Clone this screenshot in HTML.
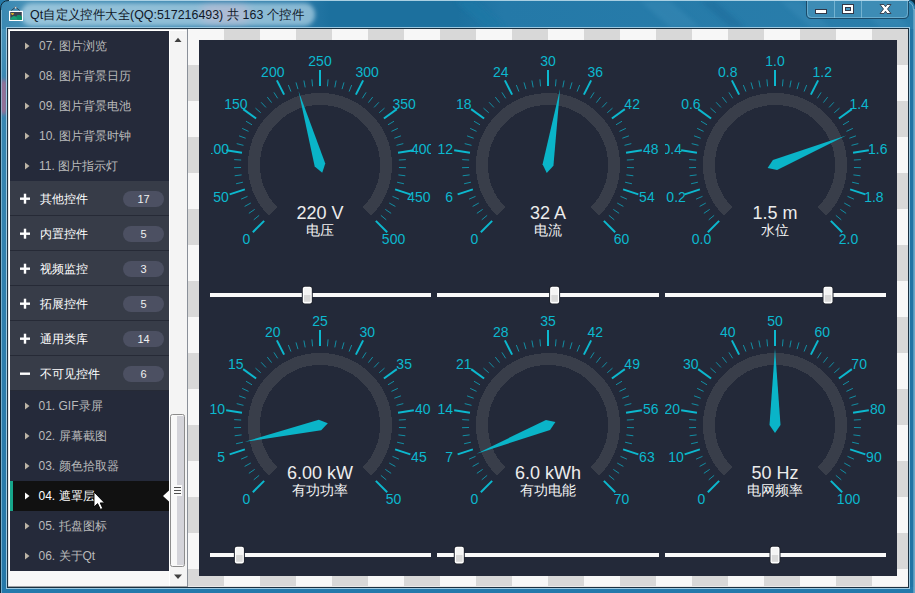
<!DOCTYPE html><html><head><meta charset="utf-8"><style>
html,body{margin:0;padding:0}body{width:915px;height:593px;overflow:hidden;position:relative;font-family:"Liberation Sans",sans-serif;background:#2a7aa8}
.ab{position:absolute}
</style></head><body>
<svg class="ab" style="left:0;top:0" width="915" height="593" viewBox="0 0 915 593" font-family="Liberation Sans, sans-serif">
<defs>
<linearGradient id="tb" x1="0" y1="0" x2="1" y2="0"><stop offset="0" stop-color="#3a88b2"/><stop offset="0.027" stop-color="#4690b6"/><stop offset="0.33" stop-color="#2a7aa8"/><stop offset="0.36" stop-color="#1c709e"/><stop offset="0.5" stop-color="#1c709e"/><stop offset="0.55" stop-color="#2479a8"/><stop offset="1" stop-color="#2a7eab"/></linearGradient>
<filter id="blur" x="-20%" y="-50%" width="140%" height="200%"><feGaussianBlur stdDeviation="4"/></filter>
<filter id="blur2" x="-20%" y="-50%" width="140%" height="200%"><feGaussianBlur stdDeviation="2.2"/></filter>
<linearGradient id="lb" x1="0" y1="0" x2="0" y2="1"><stop offset="0" stop-color="#4a94ba"/><stop offset="0.1" stop-color="#3a88b2"/><stop offset="0.5" stop-color="#3080ae"/><stop offset="1" stop-color="#2678a8"/></linearGradient>
</defs>
<rect x="0" y="0" width="915" height="593" fill="#2479a8"/>
<path d="M0 593 V9 Q0 0 9 0 H906 Q915 0 915 9 V593 Z" fill="url(#tb)"/>
<path d="M455 1 L475 1 L505 27 L485 27 Z" fill="#1f78a6" opacity="0.8" filter="url(#blur2)"/>
<path d="M640 1 L670 1 L700 27 L670 27 Z" fill="#3a8cb8" opacity="0.45" filter="url(#blur2)"/>
<path d="M700 1 L715 1 L745 27 L730 27 Z" fill="#1a6a9a" opacity="0.5" filter="url(#blur2)"/>
<path d="M780 1 L800 1 L830 27 L810 27 Z" fill="#3a8cb8" opacity="0.45" filter="url(#blur2)"/>
<path d="M850 1 L880 1 L910 27 L880 27 Z" fill="#3a8cb8" opacity="0.5" filter="url(#blur2)"/>
<rect x="0" y="29" width="7" height="564" fill="url(#lb)"/>
<rect x="0" y="80" width="7" height="34" fill="#c0688a" opacity="0.75" filter="url(#blur2)"/>
<rect x="908" y="29" width="7" height="564" fill="#2174a4"/>
<rect x="0" y="587" width="915" height="6" fill="#2479ab"/>
<path d="M0.5 593 V9 Q0.5 0.5 9 0.5" fill="none" stroke="#0d2838" stroke-width="1"/>
<path d="M909 0 L915 0 L915 6 Q914 1 909 0 Z" fill="#0d2838"/>
<path d="M905 1.5 Q913.5 1.5 913.5 10" fill="none" stroke="#a8d0e4" stroke-width="1" opacity="0.6"/>
<rect x="914" y="9" width="1" height="584" fill="#6aa8c8"/>
<rect x="9" y="0" width="897" height="1" fill="#a8cfe2"/>
<rect x="1" y="10" width="1" height="583" fill="#a8d0e4" opacity="0.6"/>
<rect x="913" y="10" width="1" height="583" fill="#a8d0e4" opacity="0.4"/>
<rect x="21" y="3" width="294" height="23" rx="11" fill="#d8eef8" opacity="0.55" filter="url(#blur2)"/>
<rect x="200" y="4" width="50" height="20" rx="10" fill="#e8b8d0" opacity="0.35" filter="url(#blur)"/>
<text x="30" y="19" font-size="13" fill="#101828" textLength="274" lengthAdjust="spacingAndGlyphs">Qt自定义控件大全(QQ:517216493) 共 163 个控件</text>
<path d="M11 10.8 L15.5 7.2 L20 10.8" fill="none" stroke="#2a3a48" stroke-width="0.9"/>
<rect x="14.8" y="6.8" width="1.6" height="1.8" fill="#e0d0c8"/>
<rect x="9" y="10.8" width="14" height="10.2" fill="#ffffff"/>
<rect x="10.2" y="12" width="11.6" height="7.8" fill="#3a4252"/>
<path d="M10.2 19.8 L10.2 18.5 Q12.5 15.6 14 16 Q15.5 16.2 16.2 17 Q17.5 14.6 19 15 Q20.8 15.6 21.8 17 L21.8 19.8 Z" fill="#18a078"/>
<path d="M16.2 17 Q17.5 14.6 19 15 Q20.8 15.6 21.8 17 L21.8 19.8 L17.5 19.8 Z" fill="#0e9068"/>
<path d="M11 13.2 Q11.8 12.6 12.5 13.2 Q13.3 12.6 14 13.2 Q13.8 14.6 12.4 15 Q11.2 14.4 11 13.2 Z" fill="#f2c020"/>
<path d="M806.5 0 V14 Q806.5 18.5 811 18.5 H904 Q908.5 18.5 908.5 14 V0" fill="#3d8cb5" stroke="#1a4a68" stroke-width="1"/>
<path d="M807.5 0 V13.5 Q807.5 17.5 811.5 17.5 H903.5 Q907.5 17.5 907.5 13.5 V0" fill="none" stroke="#8cc4de" stroke-width="0.8" opacity="0.7"/>
<line x1="834.5" y1="0" x2="834.5" y2="18" stroke="#8cc4de" stroke-width="1" opacity="0.7"/>
<line x1="861.5" y1="0" x2="861.5" y2="18" stroke="#8cc4de" stroke-width="1" opacity="0.7"/>
<rect x="815.5" y="9.5" width="11" height="4" fill="#fff" stroke="#333848" stroke-width="1"/>
<rect x="842.5" y="4.5" width="11" height="9" fill="#fff" stroke="#333848" stroke-width="1"/>
<rect x="845.5" y="7.5" width="5" height="3" fill="#4a98c0" stroke="#333848" stroke-width="1"/>
<path d="M880 4.5 L884 4.5 L885.5 6.8 L887 4.5 L891 4.5 L887.5 9 L891 13.5 L887 13.5 L885.5 11.2 L884 13.5 L880 13.5 L883.5 9 Z" fill="#fff" stroke="#333848" stroke-width="0.9"/>
<rect x="806" y="0" width="103" height="1" fill="#b0d6ea"/>
<rect x="6.5" y="27.5" width="903" height="561" fill="none" stroke="#9cc8e0" stroke-width="1"/>
<rect x="7.5" y="28.5" width="901" height="559" fill="none" stroke="#1a3040" stroke-width="1"/>
<rect x="8" y="29" width="900" height="558" fill="#f7f7f7"/>
<rect x="188" y="29" width="720" height="557" fill="#f7f7f7"/>
<rect x="224" y="29" width="36" height="36" fill="#d8d8d8"/>
<rect x="296" y="29" width="36" height="36" fill="#d8d8d8"/>
<rect x="368" y="29" width="36" height="36" fill="#d8d8d8"/>
<rect x="440" y="29" width="36" height="36" fill="#d8d8d8"/>
<rect x="512" y="29" width="36" height="36" fill="#d8d8d8"/>
<rect x="584" y="29" width="36" height="36" fill="#d8d8d8"/>
<rect x="656" y="29" width="36" height="36" fill="#d8d8d8"/>
<rect x="728" y="29" width="36" height="36" fill="#d8d8d8"/>
<rect x="800" y="29" width="36" height="36" fill="#d8d8d8"/>
<rect x="872" y="29" width="36" height="36" fill="#d8d8d8"/>
<rect x="188" y="65" width="36" height="36" fill="#d8d8d8"/>
<rect x="260" y="65" width="36" height="36" fill="#d8d8d8"/>
<rect x="332" y="65" width="36" height="36" fill="#d8d8d8"/>
<rect x="404" y="65" width="36" height="36" fill="#d8d8d8"/>
<rect x="476" y="65" width="36" height="36" fill="#d8d8d8"/>
<rect x="548" y="65" width="36" height="36" fill="#d8d8d8"/>
<rect x="620" y="65" width="36" height="36" fill="#d8d8d8"/>
<rect x="692" y="65" width="36" height="36" fill="#d8d8d8"/>
<rect x="764" y="65" width="36" height="36" fill="#d8d8d8"/>
<rect x="836" y="65" width="36" height="36" fill="#d8d8d8"/>
<rect x="224" y="101" width="36" height="36" fill="#d8d8d8"/>
<rect x="296" y="101" width="36" height="36" fill="#d8d8d8"/>
<rect x="368" y="101" width="36" height="36" fill="#d8d8d8"/>
<rect x="440" y="101" width="36" height="36" fill="#d8d8d8"/>
<rect x="512" y="101" width="36" height="36" fill="#d8d8d8"/>
<rect x="584" y="101" width="36" height="36" fill="#d8d8d8"/>
<rect x="656" y="101" width="36" height="36" fill="#d8d8d8"/>
<rect x="728" y="101" width="36" height="36" fill="#d8d8d8"/>
<rect x="800" y="101" width="36" height="36" fill="#d8d8d8"/>
<rect x="872" y="101" width="36" height="36" fill="#d8d8d8"/>
<rect x="188" y="137" width="36" height="36" fill="#d8d8d8"/>
<rect x="260" y="137" width="36" height="36" fill="#d8d8d8"/>
<rect x="332" y="137" width="36" height="36" fill="#d8d8d8"/>
<rect x="404" y="137" width="36" height="36" fill="#d8d8d8"/>
<rect x="476" y="137" width="36" height="36" fill="#d8d8d8"/>
<rect x="548" y="137" width="36" height="36" fill="#d8d8d8"/>
<rect x="620" y="137" width="36" height="36" fill="#d8d8d8"/>
<rect x="692" y="137" width="36" height="36" fill="#d8d8d8"/>
<rect x="764" y="137" width="36" height="36" fill="#d8d8d8"/>
<rect x="836" y="137" width="36" height="36" fill="#d8d8d8"/>
<rect x="224" y="173" width="36" height="36" fill="#d8d8d8"/>
<rect x="296" y="173" width="36" height="36" fill="#d8d8d8"/>
<rect x="368" y="173" width="36" height="36" fill="#d8d8d8"/>
<rect x="440" y="173" width="36" height="36" fill="#d8d8d8"/>
<rect x="512" y="173" width="36" height="36" fill="#d8d8d8"/>
<rect x="584" y="173" width="36" height="36" fill="#d8d8d8"/>
<rect x="656" y="173" width="36" height="36" fill="#d8d8d8"/>
<rect x="728" y="173" width="36" height="36" fill="#d8d8d8"/>
<rect x="800" y="173" width="36" height="36" fill="#d8d8d8"/>
<rect x="872" y="173" width="36" height="36" fill="#d8d8d8"/>
<rect x="188" y="209" width="36" height="36" fill="#d8d8d8"/>
<rect x="260" y="209" width="36" height="36" fill="#d8d8d8"/>
<rect x="332" y="209" width="36" height="36" fill="#d8d8d8"/>
<rect x="404" y="209" width="36" height="36" fill="#d8d8d8"/>
<rect x="476" y="209" width="36" height="36" fill="#d8d8d8"/>
<rect x="548" y="209" width="36" height="36" fill="#d8d8d8"/>
<rect x="620" y="209" width="36" height="36" fill="#d8d8d8"/>
<rect x="692" y="209" width="36" height="36" fill="#d8d8d8"/>
<rect x="764" y="209" width="36" height="36" fill="#d8d8d8"/>
<rect x="836" y="209" width="36" height="36" fill="#d8d8d8"/>
<rect x="224" y="245" width="36" height="36" fill="#d8d8d8"/>
<rect x="296" y="245" width="36" height="36" fill="#d8d8d8"/>
<rect x="368" y="245" width="36" height="36" fill="#d8d8d8"/>
<rect x="440" y="245" width="36" height="36" fill="#d8d8d8"/>
<rect x="512" y="245" width="36" height="36" fill="#d8d8d8"/>
<rect x="584" y="245" width="36" height="36" fill="#d8d8d8"/>
<rect x="656" y="245" width="36" height="36" fill="#d8d8d8"/>
<rect x="728" y="245" width="36" height="36" fill="#d8d8d8"/>
<rect x="800" y="245" width="36" height="36" fill="#d8d8d8"/>
<rect x="872" y="245" width="36" height="36" fill="#d8d8d8"/>
<rect x="188" y="281" width="36" height="36" fill="#d8d8d8"/>
<rect x="260" y="281" width="36" height="36" fill="#d8d8d8"/>
<rect x="332" y="281" width="36" height="36" fill="#d8d8d8"/>
<rect x="404" y="281" width="36" height="36" fill="#d8d8d8"/>
<rect x="476" y="281" width="36" height="36" fill="#d8d8d8"/>
<rect x="548" y="281" width="36" height="36" fill="#d8d8d8"/>
<rect x="620" y="281" width="36" height="36" fill="#d8d8d8"/>
<rect x="692" y="281" width="36" height="36" fill="#d8d8d8"/>
<rect x="764" y="281" width="36" height="36" fill="#d8d8d8"/>
<rect x="836" y="281" width="36" height="36" fill="#d8d8d8"/>
<rect x="224" y="317" width="36" height="36" fill="#d8d8d8"/>
<rect x="296" y="317" width="36" height="36" fill="#d8d8d8"/>
<rect x="368" y="317" width="36" height="36" fill="#d8d8d8"/>
<rect x="440" y="317" width="36" height="36" fill="#d8d8d8"/>
<rect x="512" y="317" width="36" height="36" fill="#d8d8d8"/>
<rect x="584" y="317" width="36" height="36" fill="#d8d8d8"/>
<rect x="656" y="317" width="36" height="36" fill="#d8d8d8"/>
<rect x="728" y="317" width="36" height="36" fill="#d8d8d8"/>
<rect x="800" y="317" width="36" height="36" fill="#d8d8d8"/>
<rect x="872" y="317" width="36" height="36" fill="#d8d8d8"/>
<rect x="188" y="353" width="36" height="36" fill="#d8d8d8"/>
<rect x="260" y="353" width="36" height="36" fill="#d8d8d8"/>
<rect x="332" y="353" width="36" height="36" fill="#d8d8d8"/>
<rect x="404" y="353" width="36" height="36" fill="#d8d8d8"/>
<rect x="476" y="353" width="36" height="36" fill="#d8d8d8"/>
<rect x="548" y="353" width="36" height="36" fill="#d8d8d8"/>
<rect x="620" y="353" width="36" height="36" fill="#d8d8d8"/>
<rect x="692" y="353" width="36" height="36" fill="#d8d8d8"/>
<rect x="764" y="353" width="36" height="36" fill="#d8d8d8"/>
<rect x="836" y="353" width="36" height="36" fill="#d8d8d8"/>
<rect x="224" y="389" width="36" height="36" fill="#d8d8d8"/>
<rect x="296" y="389" width="36" height="36" fill="#d8d8d8"/>
<rect x="368" y="389" width="36" height="36" fill="#d8d8d8"/>
<rect x="440" y="389" width="36" height="36" fill="#d8d8d8"/>
<rect x="512" y="389" width="36" height="36" fill="#d8d8d8"/>
<rect x="584" y="389" width="36" height="36" fill="#d8d8d8"/>
<rect x="656" y="389" width="36" height="36" fill="#d8d8d8"/>
<rect x="728" y="389" width="36" height="36" fill="#d8d8d8"/>
<rect x="800" y="389" width="36" height="36" fill="#d8d8d8"/>
<rect x="872" y="389" width="36" height="36" fill="#d8d8d8"/>
<rect x="188" y="425" width="36" height="36" fill="#d8d8d8"/>
<rect x="260" y="425" width="36" height="36" fill="#d8d8d8"/>
<rect x="332" y="425" width="36" height="36" fill="#d8d8d8"/>
<rect x="404" y="425" width="36" height="36" fill="#d8d8d8"/>
<rect x="476" y="425" width="36" height="36" fill="#d8d8d8"/>
<rect x="548" y="425" width="36" height="36" fill="#d8d8d8"/>
<rect x="620" y="425" width="36" height="36" fill="#d8d8d8"/>
<rect x="692" y="425" width="36" height="36" fill="#d8d8d8"/>
<rect x="764" y="425" width="36" height="36" fill="#d8d8d8"/>
<rect x="836" y="425" width="36" height="36" fill="#d8d8d8"/>
<rect x="224" y="461" width="36" height="36" fill="#d8d8d8"/>
<rect x="296" y="461" width="36" height="36" fill="#d8d8d8"/>
<rect x="368" y="461" width="36" height="36" fill="#d8d8d8"/>
<rect x="440" y="461" width="36" height="36" fill="#d8d8d8"/>
<rect x="512" y="461" width="36" height="36" fill="#d8d8d8"/>
<rect x="584" y="461" width="36" height="36" fill="#d8d8d8"/>
<rect x="656" y="461" width="36" height="36" fill="#d8d8d8"/>
<rect x="728" y="461" width="36" height="36" fill="#d8d8d8"/>
<rect x="800" y="461" width="36" height="36" fill="#d8d8d8"/>
<rect x="872" y="461" width="36" height="36" fill="#d8d8d8"/>
<rect x="188" y="497" width="36" height="36" fill="#d8d8d8"/>
<rect x="260" y="497" width="36" height="36" fill="#d8d8d8"/>
<rect x="332" y="497" width="36" height="36" fill="#d8d8d8"/>
<rect x="404" y="497" width="36" height="36" fill="#d8d8d8"/>
<rect x="476" y="497" width="36" height="36" fill="#d8d8d8"/>
<rect x="548" y="497" width="36" height="36" fill="#d8d8d8"/>
<rect x="620" y="497" width="36" height="36" fill="#d8d8d8"/>
<rect x="692" y="497" width="36" height="36" fill="#d8d8d8"/>
<rect x="764" y="497" width="36" height="36" fill="#d8d8d8"/>
<rect x="836" y="497" width="36" height="36" fill="#d8d8d8"/>
<rect x="224" y="533" width="36" height="36" fill="#d8d8d8"/>
<rect x="296" y="533" width="36" height="36" fill="#d8d8d8"/>
<rect x="368" y="533" width="36" height="36" fill="#d8d8d8"/>
<rect x="440" y="533" width="36" height="36" fill="#d8d8d8"/>
<rect x="512" y="533" width="36" height="36" fill="#d8d8d8"/>
<rect x="584" y="533" width="36" height="36" fill="#d8d8d8"/>
<rect x="656" y="533" width="36" height="36" fill="#d8d8d8"/>
<rect x="728" y="533" width="36" height="36" fill="#d8d8d8"/>
<rect x="800" y="533" width="36" height="36" fill="#d8d8d8"/>
<rect x="872" y="533" width="36" height="36" fill="#d8d8d8"/>
<rect x="188" y="569" width="36" height="18" fill="#d8d8d8"/>
<rect x="260" y="569" width="36" height="18" fill="#d8d8d8"/>
<rect x="332" y="569" width="36" height="18" fill="#d8d8d8"/>
<rect x="404" y="569" width="36" height="18" fill="#d8d8d8"/>
<rect x="476" y="569" width="36" height="18" fill="#d8d8d8"/>
<rect x="548" y="569" width="36" height="18" fill="#d8d8d8"/>
<rect x="620" y="569" width="36" height="18" fill="#d8d8d8"/>
<rect x="692" y="569" width="36" height="18" fill="#d8d8d8"/>
<rect x="764" y="569" width="36" height="18" fill="#d8d8d8"/>
<rect x="836" y="569" width="36" height="18" fill="#d8d8d8"/>
<rect x="187" y="29" width="1" height="558" fill="#8a9099"/>
<rect x="8" y="29" width="179" height="558" fill="#f8f8f8"/>
<rect x="8" y="29" width="179" height="1" fill="#e4e4e4"/>
<rect x="8" y="29" width="1" height="558" fill="#e4e4e4"/>
<rect x="9" y="30" width="177" height="1" fill="#ffffff"/>
<rect x="9" y="30" width="1" height="556" fill="#ffffff"/>
<rect x="10" y="31" width="159" height="540" fill="#252a3a"/>
<path d="M25 42.5 L29.5 46 L25 49.5 Z" fill="#bcb4a6"/>
<text x="39" y="49.5" font-size="12" fill="#bababa">07. 图片浏览</text>
<path d="M25 72.5 L29.5 76 L25 79.5 Z" fill="#bcb4a6"/>
<text x="39" y="79.5" font-size="12" fill="#bababa">08. 图片背景日历</text>
<path d="M25 102.5 L29.5 106 L25 109.5 Z" fill="#bcb4a6"/>
<text x="39" y="109.5" font-size="12" fill="#bababa">09. 图片背景电池</text>
<path d="M25 132.5 L29.5 136 L25 139.5 Z" fill="#bcb4a6"/>
<text x="39" y="139.5" font-size="12" fill="#bababa">10. 图片背景时钟</text>
<path d="M25 162.5 L29.5 166 L25 169.5 Z" fill="#bcb4a6"/>
<text x="39" y="169.5" font-size="12" fill="#bababa">11. 图片指示灯</text>
<rect x="10" y="181" width="159" height="35" fill="#373c48"/>
<rect x="10" y="215" width="159" height="1" fill="#262a36"/>
<rect x="20" y="197.5" width="10" height="2.4" fill="#ffffff"/>
<rect x="23.8" y="193.7" width="2.4" height="10" fill="#ffffff"/>
<text x="40" y="202.5" font-size="12" fill="#ffffff">其他控件</text>
<rect x="123" y="191" width="41" height="16" rx="8" fill="#4c5062"/>
<text x="143.5" y="202.5" font-size="11" fill="#f0f0f0" text-anchor="middle">17</text>
<rect x="10" y="216" width="159" height="35" fill="#373c48"/>
<rect x="10" y="250" width="159" height="1" fill="#262a36"/>
<rect x="20" y="232.5" width="10" height="2.4" fill="#ffffff"/>
<rect x="23.8" y="228.7" width="2.4" height="10" fill="#ffffff"/>
<text x="40" y="237.5" font-size="12" fill="#ffffff">内置控件</text>
<rect x="123" y="226" width="41" height="16" rx="8" fill="#4c5062"/>
<text x="143.5" y="237.5" font-size="11" fill="#f0f0f0" text-anchor="middle">5</text>
<rect x="10" y="251" width="159" height="35" fill="#373c48"/>
<rect x="10" y="285" width="159" height="1" fill="#262a36"/>
<rect x="20" y="267.5" width="10" height="2.4" fill="#ffffff"/>
<rect x="23.8" y="263.7" width="2.4" height="10" fill="#ffffff"/>
<text x="40" y="272.5" font-size="12" fill="#ffffff">视频监控</text>
<rect x="123" y="261" width="41" height="16" rx="8" fill="#4c5062"/>
<text x="143.5" y="272.5" font-size="11" fill="#f0f0f0" text-anchor="middle">3</text>
<rect x="10" y="286" width="159" height="35" fill="#373c48"/>
<rect x="10" y="320" width="159" height="1" fill="#262a36"/>
<rect x="20" y="302.5" width="10" height="2.4" fill="#ffffff"/>
<rect x="23.8" y="298.7" width="2.4" height="10" fill="#ffffff"/>
<text x="40" y="307.5" font-size="12" fill="#ffffff">拓展控件</text>
<rect x="123" y="296" width="41" height="16" rx="8" fill="#4c5062"/>
<text x="143.5" y="307.5" font-size="11" fill="#f0f0f0" text-anchor="middle">5</text>
<rect x="10" y="321" width="159" height="35" fill="#373c48"/>
<rect x="10" y="355" width="159" height="1" fill="#262a36"/>
<rect x="20" y="337.5" width="10" height="2.4" fill="#ffffff"/>
<rect x="23.8" y="333.7" width="2.4" height="10" fill="#ffffff"/>
<text x="40" y="342.5" font-size="12" fill="#ffffff">通用类库</text>
<rect x="123" y="331" width="41" height="16" rx="8" fill="#4c5062"/>
<text x="143.5" y="342.5" font-size="11" fill="#f0f0f0" text-anchor="middle">14</text>
<rect x="10" y="356" width="159" height="35" fill="#373c48"/>
<rect x="10" y="390" width="159" height="1" fill="#262a36"/>
<rect x="20" y="372.5" width="10" height="2.4" fill="#ffffff"/>
<text x="40" y="377.5" font-size="12" fill="#ffffff">不可见控件</text>
<rect x="123" y="366" width="41" height="16" rx="8" fill="#4c5062"/>
<text x="143.5" y="377.5" font-size="11" fill="#f0f0f0" text-anchor="middle">6</text>
<path d="M25 402.5 L29.5 406 L25 409.5 Z" fill="#bcb4a6"/>
<text x="38.5" y="409.5" font-size="12" fill="#bababa">01. GIF录屏</text>
<path d="M25 432.5 L29.5 436 L25 439.5 Z" fill="#bcb4a6"/>
<text x="38.5" y="439.5" font-size="12" fill="#bababa">02. 屏幕截图</text>
<path d="M25 462.5 L29.5 466 L25 469.5 Z" fill="#bcb4a6"/>
<text x="38.5" y="469.5" font-size="12" fill="#bababa">03. 颜色拾取器</text>
<rect x="10" y="481" width="159" height="30" fill="#111111"/>
<rect x="10" y="481" width="3" height="30" fill="#16a58a"/>
<path d="M169 490.5 L163 496 L169 501.5 Z" fill="#ffffff"/>
<path d="M25 492.5 L29.5 496 L25 499.5 Z" fill="#ffffff"/>
<text x="38.5" y="499.5" font-size="12" fill="#ffffff">04. 遮罩层</text>
<path d="M25 522.5 L29.5 526 L25 529.5 Z" fill="#bcb4a6"/>
<text x="38.5" y="529.5" font-size="12" fill="#bababa">05. 托盘图标</text>
<path d="M25 552.5 L29.5 556 L25 559.5 Z" fill="#bcb4a6"/>
<text x="38.5" y="559.5" font-size="12" fill="#bababa">06. 关于Qt</text>
<path d="M94.0 492.0 L94.0 507.0 L97.6 503.6 L100.4 509.4 L102.8 508.4 L100.2 502.9 L104.6 502.9 Z" fill="#ffffff" stroke="#000" stroke-width="0.9" stroke-linejoin="miter"/>
<rect x="169" y="31" width="1" height="555" fill="#ffffff"/>
<rect x="170" y="31" width="17" height="555" fill="#f4f4f4"/>
<path d="M174.5 42 L178 37.8 L181.5 42 Z" fill="#404040"/>
<path d="M174 574.5 L178 579 L182 574.5 Z" fill="#404040"/>
<rect x="170.5" y="414.5" width="14" height="152" rx="2" fill="#f8f8f8" stroke="#8c8c8c" stroke-width="1"/>
<rect x="177" y="416" width="7" height="149" fill="#d4d4da"/>
<rect x="173" y="485" width="9" height="11" fill="#fafafa"/>
<rect x="174" y="487" width="7" height="1" fill="#505050"/>
<rect x="174" y="490" width="7" height="1" fill="#505050"/>
<rect x="174" y="493" width="7" height="1" fill="#505050"/>
<rect x="8" y="586" width="179" height="1" fill="#a0a2a6"/>
<rect x="188" y="586" width="720" height="1" fill="#ebe8e8"/>
<rect x="199" y="40" width="698" height="536" fill="#232939"/>
<clipPath id="c0"><rect x="211" y="40" width="220" height="250"/></clipPath>
<g clip-path="url(#c0)">
<path d="M273.33 211.67 A66 66 0 1 1 366.67 211.67" fill="none" stroke="#393e4a" stroke-width="12" shape-rendering="crispEdges"/>
<line x1="264.14" y1="220.86" x2="252.82" y2="232.18" stroke="#0cb8ce" stroke-width="2"/>
<text x="246.46" y="243.54" font-size="14" fill="#0cb8ce" text-anchor="middle">0</text>
<line x1="259.13" y1="215.36" x2="253.74" y2="219.82" stroke="#0cb8ce" stroke-width="1" stroke-opacity="0.7"/>
<line x1="254.66" y1="209.40" x2="248.87" y2="213.34" stroke="#0cb8ce" stroke-width="1" stroke-opacity="0.7"/>
<line x1="250.77" y1="203.06" x2="244.64" y2="206.43" stroke="#0cb8ce" stroke-width="1" stroke-opacity="0.7"/>
<line x1="247.50" y1="196.37" x2="241.07" y2="199.15" stroke="#0cb8ce" stroke-width="1" stroke-opacity="0.7"/>
<line x1="244.87" y1="189.41" x2="229.65" y2="194.36" stroke="#0cb8ce" stroke-width="2"/>
<text x="221.09" y="202.14" font-size="14" fill="#0cb8ce" text-anchor="middle">50</text>
<line x1="242.90" y1="182.23" x2="236.07" y2="183.76" stroke="#0cb8ce" stroke-width="1" stroke-opacity="0.7"/>
<line x1="241.62" y1="174.90" x2="234.68" y2="175.78" stroke="#0cb8ce" stroke-width="1" stroke-opacity="0.7"/>
<line x1="241.04" y1="167.48" x2="234.04" y2="167.70" stroke="#0cb8ce" stroke-width="1" stroke-opacity="0.7"/>
<line x1="241.16" y1="160.04" x2="234.17" y2="159.60" stroke="#0cb8ce" stroke-width="1" stroke-opacity="0.7"/>
<line x1="241.97" y1="152.64" x2="226.17" y2="150.14" stroke="#0cb8ce" stroke-width="2"/>
<text x="217.28" y="153.73" font-size="14" fill="#0cb8ce" text-anchor="middle">100</text>
<line x1="243.48" y1="145.35" x2="236.70" y2="143.61" stroke="#0cb8ce" stroke-width="1" stroke-opacity="0.7"/>
<line x1="245.67" y1="138.24" x2="239.08" y2="135.87" stroke="#0cb8ce" stroke-width="1" stroke-opacity="0.7"/>
<line x1="248.52" y1="131.36" x2="242.18" y2="128.38" stroke="#0cb8ce" stroke-width="1" stroke-opacity="0.7"/>
<line x1="252.00" y1="124.79" x2="245.98" y2="121.22" stroke="#0cb8ce" stroke-width="1" stroke-opacity="0.7"/>
<line x1="256.09" y1="118.56" x2="243.14" y2="109.16" stroke="#0cb8ce" stroke-width="2"/>
<text x="235.86" y="108.87" font-size="14" fill="#0cb8ce" text-anchor="middle">150</text>
<line x1="260.74" y1="112.76" x2="255.49" y2="108.13" stroke="#0cb8ce" stroke-width="1" stroke-opacity="0.7"/>
<line x1="265.92" y1="107.41" x2="261.13" y2="102.31" stroke="#0cb8ce" stroke-width="1" stroke-opacity="0.7"/>
<line x1="271.58" y1="102.58" x2="267.29" y2="97.05" stroke="#0cb8ce" stroke-width="1" stroke-opacity="0.7"/>
<line x1="277.67" y1="98.30" x2="273.92" y2="92.39" stroke="#0cb8ce" stroke-width="1" stroke-opacity="0.7"/>
<line x1="284.13" y1="94.61" x2="276.87" y2="80.35" stroke="#0cb8ce" stroke-width="2"/>
<text x="272.78" y="77.34" font-size="14" fill="#0cb8ce" text-anchor="middle">200</text>
<line x1="290.92" y1="91.55" x2="288.34" y2="85.04" stroke="#0cb8ce" stroke-width="1" stroke-opacity="0.7"/>
<line x1="297.96" y1="89.14" x2="296.01" y2="82.41" stroke="#0cb8ce" stroke-width="1" stroke-opacity="0.7"/>
<line x1="305.20" y1="87.40" x2="303.89" y2="80.52" stroke="#0cb8ce" stroke-width="1" stroke-opacity="0.7"/>
<line x1="312.57" y1="86.35" x2="311.91" y2="79.38" stroke="#0cb8ce" stroke-width="1" stroke-opacity="0.7"/>
<line x1="320.00" y1="86.00" x2="320.00" y2="70.00" stroke="#0cb8ce" stroke-width="2"/>
<text x="320.00" y="66.00" font-size="14" fill="#0cb8ce" text-anchor="middle">250</text>
<line x1="327.43" y1="86.35" x2="328.09" y2="79.38" stroke="#0cb8ce" stroke-width="1" stroke-opacity="0.7"/>
<line x1="334.80" y1="87.40" x2="336.11" y2="80.52" stroke="#0cb8ce" stroke-width="1" stroke-opacity="0.7"/>
<line x1="342.04" y1="89.14" x2="343.99" y2="82.41" stroke="#0cb8ce" stroke-width="1" stroke-opacity="0.7"/>
<line x1="349.08" y1="91.55" x2="351.66" y2="85.04" stroke="#0cb8ce" stroke-width="1" stroke-opacity="0.7"/>
<line x1="355.87" y1="94.61" x2="363.13" y2="80.35" stroke="#0cb8ce" stroke-width="2"/>
<text x="367.22" y="77.34" font-size="14" fill="#0cb8ce" text-anchor="middle">300</text>
<line x1="362.33" y1="98.30" x2="366.08" y2="92.39" stroke="#0cb8ce" stroke-width="1" stroke-opacity="0.7"/>
<line x1="368.42" y1="102.58" x2="372.71" y2="97.05" stroke="#0cb8ce" stroke-width="1" stroke-opacity="0.7"/>
<line x1="374.08" y1="107.41" x2="378.87" y2="102.31" stroke="#0cb8ce" stroke-width="1" stroke-opacity="0.7"/>
<line x1="379.26" y1="112.76" x2="384.51" y2="108.13" stroke="#0cb8ce" stroke-width="1" stroke-opacity="0.7"/>
<line x1="383.91" y1="118.56" x2="396.86" y2="109.16" stroke="#0cb8ce" stroke-width="2"/>
<text x="404.14" y="108.87" font-size="14" fill="#0cb8ce" text-anchor="middle">350</text>
<line x1="388.00" y1="124.79" x2="394.02" y2="121.22" stroke="#0cb8ce" stroke-width="1" stroke-opacity="0.7"/>
<line x1="391.48" y1="131.36" x2="397.82" y2="128.38" stroke="#0cb8ce" stroke-width="1" stroke-opacity="0.7"/>
<line x1="394.33" y1="138.24" x2="400.92" y2="135.87" stroke="#0cb8ce" stroke-width="1" stroke-opacity="0.7"/>
<line x1="396.52" y1="145.35" x2="403.30" y2="143.61" stroke="#0cb8ce" stroke-width="1" stroke-opacity="0.7"/>
<line x1="398.03" y1="152.64" x2="413.83" y2="150.14" stroke="#0cb8ce" stroke-width="2"/>
<text x="422.72" y="153.73" font-size="14" fill="#0cb8ce" text-anchor="middle">400</text>
<line x1="398.84" y1="160.04" x2="405.83" y2="159.60" stroke="#0cb8ce" stroke-width="1" stroke-opacity="0.7"/>
<line x1="398.96" y1="167.48" x2="405.96" y2="167.70" stroke="#0cb8ce" stroke-width="1" stroke-opacity="0.7"/>
<line x1="398.38" y1="174.90" x2="405.32" y2="175.78" stroke="#0cb8ce" stroke-width="1" stroke-opacity="0.7"/>
<line x1="397.10" y1="182.23" x2="403.93" y2="183.76" stroke="#0cb8ce" stroke-width="1" stroke-opacity="0.7"/>
<line x1="395.13" y1="189.41" x2="410.35" y2="194.36" stroke="#0cb8ce" stroke-width="2"/>
<text x="418.91" y="202.14" font-size="14" fill="#0cb8ce" text-anchor="middle">450</text>
<line x1="392.50" y1="196.37" x2="398.93" y2="199.15" stroke="#0cb8ce" stroke-width="1" stroke-opacity="0.7"/>
<line x1="389.23" y1="203.06" x2="395.36" y2="206.43" stroke="#0cb8ce" stroke-width="1" stroke-opacity="0.7"/>
<line x1="385.34" y1="209.40" x2="391.13" y2="213.34" stroke="#0cb8ce" stroke-width="1" stroke-opacity="0.7"/>
<line x1="380.87" y1="215.36" x2="386.26" y2="219.82" stroke="#0cb8ce" stroke-width="1" stroke-opacity="0.7"/>
<line x1="375.86" y1="220.86" x2="387.18" y2="232.18" stroke="#0cb8ce" stroke-width="2"/>
<text x="393.54" y="243.54" font-size="14" fill="#0cb8ce" text-anchor="middle">500</text>
<path d="M298.52 91.06 L325.28 163.47 L322.23 172.68 L314.72 166.53 Z" fill="#0ab4c8"/>
<text x="320" y="219" font-size="18" fill="#ececec" text-anchor="middle">220 V</text>
<text x="320" y="235" font-size="13.5" fill="#f4f4f4" text-anchor="middle">电压</text>
</g>
<rect x="210" y="293" width="221" height="4" fill="#fafafa"/>
<rect x="301.8" y="285.7" width="11" height="18.8" rx="3" fill="#20242f"/>
<rect x="302.8" y="286.7" width="9" height="16.8" rx="2" fill="#ffffff"/>
<rect x="304.0" y="288" width="6.6" height="7" fill="#f4f4f4"/>
<rect x="304.0" y="295" width="6.6" height="6.8" fill="#d9d9d9"/>
<clipPath id="c1"><rect x="437" y="40" width="222" height="250"/></clipPath>
<g clip-path="url(#c1)">
<path d="M501.33 211.67 A66 66 0 1 1 594.67 211.67" fill="none" stroke="#393e4a" stroke-width="12" shape-rendering="crispEdges"/>
<line x1="492.14" y1="220.86" x2="480.82" y2="232.18" stroke="#0cb8ce" stroke-width="2"/>
<text x="474.46" y="243.54" font-size="14" fill="#0cb8ce" text-anchor="middle">0</text>
<line x1="487.13" y1="215.36" x2="481.74" y2="219.82" stroke="#0cb8ce" stroke-width="1" stroke-opacity="0.7"/>
<line x1="482.66" y1="209.40" x2="476.87" y2="213.34" stroke="#0cb8ce" stroke-width="1" stroke-opacity="0.7"/>
<line x1="478.77" y1="203.06" x2="472.64" y2="206.43" stroke="#0cb8ce" stroke-width="1" stroke-opacity="0.7"/>
<line x1="475.50" y1="196.37" x2="469.07" y2="199.15" stroke="#0cb8ce" stroke-width="1" stroke-opacity="0.7"/>
<line x1="472.87" y1="189.41" x2="457.65" y2="194.36" stroke="#0cb8ce" stroke-width="2"/>
<text x="449.09" y="202.14" font-size="14" fill="#0cb8ce" text-anchor="middle">6</text>
<line x1="470.90" y1="182.23" x2="464.07" y2="183.76" stroke="#0cb8ce" stroke-width="1" stroke-opacity="0.7"/>
<line x1="469.62" y1="174.90" x2="462.68" y2="175.78" stroke="#0cb8ce" stroke-width="1" stroke-opacity="0.7"/>
<line x1="469.04" y1="167.48" x2="462.04" y2="167.70" stroke="#0cb8ce" stroke-width="1" stroke-opacity="0.7"/>
<line x1="469.16" y1="160.04" x2="462.17" y2="159.60" stroke="#0cb8ce" stroke-width="1" stroke-opacity="0.7"/>
<line x1="469.97" y1="152.64" x2="454.17" y2="150.14" stroke="#0cb8ce" stroke-width="2"/>
<text x="445.28" y="153.73" font-size="14" fill="#0cb8ce" text-anchor="middle">12</text>
<line x1="471.48" y1="145.35" x2="464.70" y2="143.61" stroke="#0cb8ce" stroke-width="1" stroke-opacity="0.7"/>
<line x1="473.67" y1="138.24" x2="467.08" y2="135.87" stroke="#0cb8ce" stroke-width="1" stroke-opacity="0.7"/>
<line x1="476.52" y1="131.36" x2="470.18" y2="128.38" stroke="#0cb8ce" stroke-width="1" stroke-opacity="0.7"/>
<line x1="480.00" y1="124.79" x2="473.98" y2="121.22" stroke="#0cb8ce" stroke-width="1" stroke-opacity="0.7"/>
<line x1="484.09" y1="118.56" x2="471.14" y2="109.16" stroke="#0cb8ce" stroke-width="2"/>
<text x="463.86" y="108.87" font-size="14" fill="#0cb8ce" text-anchor="middle">18</text>
<line x1="488.74" y1="112.76" x2="483.49" y2="108.13" stroke="#0cb8ce" stroke-width="1" stroke-opacity="0.7"/>
<line x1="493.92" y1="107.41" x2="489.13" y2="102.31" stroke="#0cb8ce" stroke-width="1" stroke-opacity="0.7"/>
<line x1="499.58" y1="102.58" x2="495.29" y2="97.05" stroke="#0cb8ce" stroke-width="1" stroke-opacity="0.7"/>
<line x1="505.67" y1="98.30" x2="501.92" y2="92.39" stroke="#0cb8ce" stroke-width="1" stroke-opacity="0.7"/>
<line x1="512.13" y1="94.61" x2="504.87" y2="80.35" stroke="#0cb8ce" stroke-width="2"/>
<text x="500.78" y="77.34" font-size="14" fill="#0cb8ce" text-anchor="middle">24</text>
<line x1="518.92" y1="91.55" x2="516.34" y2="85.04" stroke="#0cb8ce" stroke-width="1" stroke-opacity="0.7"/>
<line x1="525.96" y1="89.14" x2="524.01" y2="82.41" stroke="#0cb8ce" stroke-width="1" stroke-opacity="0.7"/>
<line x1="533.20" y1="87.40" x2="531.89" y2="80.52" stroke="#0cb8ce" stroke-width="1" stroke-opacity="0.7"/>
<line x1="540.57" y1="86.35" x2="539.91" y2="79.38" stroke="#0cb8ce" stroke-width="1" stroke-opacity="0.7"/>
<line x1="548.00" y1="86.00" x2="548.00" y2="70.00" stroke="#0cb8ce" stroke-width="2"/>
<text x="548.00" y="66.00" font-size="14" fill="#0cb8ce" text-anchor="middle">30</text>
<line x1="555.43" y1="86.35" x2="556.09" y2="79.38" stroke="#0cb8ce" stroke-width="1" stroke-opacity="0.7"/>
<line x1="562.80" y1="87.40" x2="564.11" y2="80.52" stroke="#0cb8ce" stroke-width="1" stroke-opacity="0.7"/>
<line x1="570.04" y1="89.14" x2="571.99" y2="82.41" stroke="#0cb8ce" stroke-width="1" stroke-opacity="0.7"/>
<line x1="577.08" y1="91.55" x2="579.66" y2="85.04" stroke="#0cb8ce" stroke-width="1" stroke-opacity="0.7"/>
<line x1="583.87" y1="94.61" x2="591.13" y2="80.35" stroke="#0cb8ce" stroke-width="2"/>
<text x="595.22" y="77.34" font-size="14" fill="#0cb8ce" text-anchor="middle">36</text>
<line x1="590.33" y1="98.30" x2="594.08" y2="92.39" stroke="#0cb8ce" stroke-width="1" stroke-opacity="0.7"/>
<line x1="596.42" y1="102.58" x2="600.71" y2="97.05" stroke="#0cb8ce" stroke-width="1" stroke-opacity="0.7"/>
<line x1="602.08" y1="107.41" x2="606.87" y2="102.31" stroke="#0cb8ce" stroke-width="1" stroke-opacity="0.7"/>
<line x1="607.26" y1="112.76" x2="612.51" y2="108.13" stroke="#0cb8ce" stroke-width="1" stroke-opacity="0.7"/>
<line x1="611.91" y1="118.56" x2="624.86" y2="109.16" stroke="#0cb8ce" stroke-width="2"/>
<text x="632.14" y="108.87" font-size="14" fill="#0cb8ce" text-anchor="middle">42</text>
<line x1="616.00" y1="124.79" x2="622.02" y2="121.22" stroke="#0cb8ce" stroke-width="1" stroke-opacity="0.7"/>
<line x1="619.48" y1="131.36" x2="625.82" y2="128.38" stroke="#0cb8ce" stroke-width="1" stroke-opacity="0.7"/>
<line x1="622.33" y1="138.24" x2="628.92" y2="135.87" stroke="#0cb8ce" stroke-width="1" stroke-opacity="0.7"/>
<line x1="624.52" y1="145.35" x2="631.30" y2="143.61" stroke="#0cb8ce" stroke-width="1" stroke-opacity="0.7"/>
<line x1="626.03" y1="152.64" x2="641.83" y2="150.14" stroke="#0cb8ce" stroke-width="2"/>
<text x="650.72" y="153.73" font-size="14" fill="#0cb8ce" text-anchor="middle">48</text>
<line x1="626.84" y1="160.04" x2="633.83" y2="159.60" stroke="#0cb8ce" stroke-width="1" stroke-opacity="0.7"/>
<line x1="626.96" y1="167.48" x2="633.96" y2="167.70" stroke="#0cb8ce" stroke-width="1" stroke-opacity="0.7"/>
<line x1="626.38" y1="174.90" x2="633.32" y2="175.78" stroke="#0cb8ce" stroke-width="1" stroke-opacity="0.7"/>
<line x1="625.10" y1="182.23" x2="631.93" y2="183.76" stroke="#0cb8ce" stroke-width="1" stroke-opacity="0.7"/>
<line x1="623.13" y1="189.41" x2="638.35" y2="194.36" stroke="#0cb8ce" stroke-width="2"/>
<text x="646.91" y="202.14" font-size="14" fill="#0cb8ce" text-anchor="middle">54</text>
<line x1="620.50" y1="196.37" x2="626.93" y2="199.15" stroke="#0cb8ce" stroke-width="1" stroke-opacity="0.7"/>
<line x1="617.23" y1="203.06" x2="623.36" y2="206.43" stroke="#0cb8ce" stroke-width="1" stroke-opacity="0.7"/>
<line x1="613.34" y1="209.40" x2="619.13" y2="213.34" stroke="#0cb8ce" stroke-width="1" stroke-opacity="0.7"/>
<line x1="608.87" y1="215.36" x2="614.26" y2="219.82" stroke="#0cb8ce" stroke-width="1" stroke-opacity="0.7"/>
<line x1="603.86" y1="220.86" x2="615.18" y2="232.18" stroke="#0cb8ce" stroke-width="2"/>
<text x="621.54" y="243.54" font-size="14" fill="#0cb8ce" text-anchor="middle">60</text>
<path d="M560.05 88.95 L553.43 165.86 L546.75 172.90 L542.57 164.14 Z" fill="#0ab4c8"/>
<text x="548" y="219" font-size="18" fill="#ececec" text-anchor="middle">32 A</text>
<text x="548" y="235" font-size="13.5" fill="#f4f4f4" text-anchor="middle">电流</text>
</g>
<rect x="437" y="293" width="222" height="4" fill="#fafafa"/>
<rect x="549.1" y="285.7" width="11" height="18.8" rx="3" fill="#20242f"/>
<rect x="550.1" y="286.7" width="9" height="16.8" rx="2" fill="#ffffff"/>
<rect x="551.3" y="288" width="6.6" height="7" fill="#f4f4f4"/>
<rect x="551.3" y="295" width="6.6" height="6.8" fill="#d9d9d9"/>
<clipPath id="c2"><rect x="665" y="40" width="222" height="250"/></clipPath>
<g clip-path="url(#c2)">
<path d="M728.33 211.67 A66 66 0 1 1 821.67 211.67" fill="none" stroke="#393e4a" stroke-width="12" shape-rendering="crispEdges"/>
<line x1="719.14" y1="220.86" x2="707.82" y2="232.18" stroke="#0cb8ce" stroke-width="2"/>
<text x="701.46" y="243.54" font-size="14" fill="#0cb8ce" text-anchor="middle">0.0</text>
<line x1="714.13" y1="215.36" x2="708.74" y2="219.82" stroke="#0cb8ce" stroke-width="1" stroke-opacity="0.7"/>
<line x1="709.66" y1="209.40" x2="703.87" y2="213.34" stroke="#0cb8ce" stroke-width="1" stroke-opacity="0.7"/>
<line x1="705.77" y1="203.06" x2="699.64" y2="206.43" stroke="#0cb8ce" stroke-width="1" stroke-opacity="0.7"/>
<line x1="702.50" y1="196.37" x2="696.07" y2="199.15" stroke="#0cb8ce" stroke-width="1" stroke-opacity="0.7"/>
<line x1="699.87" y1="189.41" x2="684.65" y2="194.36" stroke="#0cb8ce" stroke-width="2"/>
<text x="676.09" y="202.14" font-size="14" fill="#0cb8ce" text-anchor="middle">0.2</text>
<line x1="697.90" y1="182.23" x2="691.07" y2="183.76" stroke="#0cb8ce" stroke-width="1" stroke-opacity="0.7"/>
<line x1="696.62" y1="174.90" x2="689.68" y2="175.78" stroke="#0cb8ce" stroke-width="1" stroke-opacity="0.7"/>
<line x1="696.04" y1="167.48" x2="689.04" y2="167.70" stroke="#0cb8ce" stroke-width="1" stroke-opacity="0.7"/>
<line x1="696.16" y1="160.04" x2="689.17" y2="159.60" stroke="#0cb8ce" stroke-width="1" stroke-opacity="0.7"/>
<line x1="696.97" y1="152.64" x2="681.17" y2="150.14" stroke="#0cb8ce" stroke-width="2"/>
<text x="672.28" y="153.73" font-size="14" fill="#0cb8ce" text-anchor="middle">0.4</text>
<line x1="698.48" y1="145.35" x2="691.70" y2="143.61" stroke="#0cb8ce" stroke-width="1" stroke-opacity="0.7"/>
<line x1="700.67" y1="138.24" x2="694.08" y2="135.87" stroke="#0cb8ce" stroke-width="1" stroke-opacity="0.7"/>
<line x1="703.52" y1="131.36" x2="697.18" y2="128.38" stroke="#0cb8ce" stroke-width="1" stroke-opacity="0.7"/>
<line x1="707.00" y1="124.79" x2="700.98" y2="121.22" stroke="#0cb8ce" stroke-width="1" stroke-opacity="0.7"/>
<line x1="711.09" y1="118.56" x2="698.14" y2="109.16" stroke="#0cb8ce" stroke-width="2"/>
<text x="690.86" y="108.87" font-size="14" fill="#0cb8ce" text-anchor="middle">0.6</text>
<line x1="715.74" y1="112.76" x2="710.49" y2="108.13" stroke="#0cb8ce" stroke-width="1" stroke-opacity="0.7"/>
<line x1="720.92" y1="107.41" x2="716.13" y2="102.31" stroke="#0cb8ce" stroke-width="1" stroke-opacity="0.7"/>
<line x1="726.58" y1="102.58" x2="722.29" y2="97.05" stroke="#0cb8ce" stroke-width="1" stroke-opacity="0.7"/>
<line x1="732.67" y1="98.30" x2="728.92" y2="92.39" stroke="#0cb8ce" stroke-width="1" stroke-opacity="0.7"/>
<line x1="739.13" y1="94.61" x2="731.87" y2="80.35" stroke="#0cb8ce" stroke-width="2"/>
<text x="727.78" y="77.34" font-size="14" fill="#0cb8ce" text-anchor="middle">0.8</text>
<line x1="745.92" y1="91.55" x2="743.34" y2="85.04" stroke="#0cb8ce" stroke-width="1" stroke-opacity="0.7"/>
<line x1="752.96" y1="89.14" x2="751.01" y2="82.41" stroke="#0cb8ce" stroke-width="1" stroke-opacity="0.7"/>
<line x1="760.20" y1="87.40" x2="758.89" y2="80.52" stroke="#0cb8ce" stroke-width="1" stroke-opacity="0.7"/>
<line x1="767.57" y1="86.35" x2="766.91" y2="79.38" stroke="#0cb8ce" stroke-width="1" stroke-opacity="0.7"/>
<line x1="775.00" y1="86.00" x2="775.00" y2="70.00" stroke="#0cb8ce" stroke-width="2"/>
<text x="775.00" y="66.00" font-size="14" fill="#0cb8ce" text-anchor="middle">1.0</text>
<line x1="782.43" y1="86.35" x2="783.09" y2="79.38" stroke="#0cb8ce" stroke-width="1" stroke-opacity="0.7"/>
<line x1="789.80" y1="87.40" x2="791.11" y2="80.52" stroke="#0cb8ce" stroke-width="1" stroke-opacity="0.7"/>
<line x1="797.04" y1="89.14" x2="798.99" y2="82.41" stroke="#0cb8ce" stroke-width="1" stroke-opacity="0.7"/>
<line x1="804.08" y1="91.55" x2="806.66" y2="85.04" stroke="#0cb8ce" stroke-width="1" stroke-opacity="0.7"/>
<line x1="810.87" y1="94.61" x2="818.13" y2="80.35" stroke="#0cb8ce" stroke-width="2"/>
<text x="822.22" y="77.34" font-size="14" fill="#0cb8ce" text-anchor="middle">1.2</text>
<line x1="817.33" y1="98.30" x2="821.08" y2="92.39" stroke="#0cb8ce" stroke-width="1" stroke-opacity="0.7"/>
<line x1="823.42" y1="102.58" x2="827.71" y2="97.05" stroke="#0cb8ce" stroke-width="1" stroke-opacity="0.7"/>
<line x1="829.08" y1="107.41" x2="833.87" y2="102.31" stroke="#0cb8ce" stroke-width="1" stroke-opacity="0.7"/>
<line x1="834.26" y1="112.76" x2="839.51" y2="108.13" stroke="#0cb8ce" stroke-width="1" stroke-opacity="0.7"/>
<line x1="838.91" y1="118.56" x2="851.86" y2="109.16" stroke="#0cb8ce" stroke-width="2"/>
<text x="859.14" y="108.87" font-size="14" fill="#0cb8ce" text-anchor="middle">1.4</text>
<line x1="843.00" y1="124.79" x2="849.02" y2="121.22" stroke="#0cb8ce" stroke-width="1" stroke-opacity="0.7"/>
<line x1="846.48" y1="131.36" x2="852.82" y2="128.38" stroke="#0cb8ce" stroke-width="1" stroke-opacity="0.7"/>
<line x1="849.33" y1="138.24" x2="855.92" y2="135.87" stroke="#0cb8ce" stroke-width="1" stroke-opacity="0.7"/>
<line x1="851.52" y1="145.35" x2="858.30" y2="143.61" stroke="#0cb8ce" stroke-width="1" stroke-opacity="0.7"/>
<line x1="853.03" y1="152.64" x2="868.83" y2="150.14" stroke="#0cb8ce" stroke-width="2"/>
<text x="877.72" y="153.73" font-size="14" fill="#0cb8ce" text-anchor="middle">1.6</text>
<line x1="853.84" y1="160.04" x2="860.83" y2="159.60" stroke="#0cb8ce" stroke-width="1" stroke-opacity="0.7"/>
<line x1="853.96" y1="167.48" x2="860.96" y2="167.70" stroke="#0cb8ce" stroke-width="1" stroke-opacity="0.7"/>
<line x1="853.38" y1="174.90" x2="860.32" y2="175.78" stroke="#0cb8ce" stroke-width="1" stroke-opacity="0.7"/>
<line x1="852.10" y1="182.23" x2="858.93" y2="183.76" stroke="#0cb8ce" stroke-width="1" stroke-opacity="0.7"/>
<line x1="850.13" y1="189.41" x2="865.35" y2="194.36" stroke="#0cb8ce" stroke-width="2"/>
<text x="873.91" y="202.14" font-size="14" fill="#0cb8ce" text-anchor="middle">1.8</text>
<line x1="847.50" y1="196.37" x2="853.93" y2="199.15" stroke="#0cb8ce" stroke-width="1" stroke-opacity="0.7"/>
<line x1="844.23" y1="203.06" x2="850.36" y2="206.43" stroke="#0cb8ce" stroke-width="1" stroke-opacity="0.7"/>
<line x1="840.34" y1="209.40" x2="846.13" y2="213.34" stroke="#0cb8ce" stroke-width="1" stroke-opacity="0.7"/>
<line x1="835.87" y1="215.36" x2="841.26" y2="219.82" stroke="#0cb8ce" stroke-width="1" stroke-opacity="0.7"/>
<line x1="830.86" y1="220.86" x2="842.18" y2="232.18" stroke="#0cb8ce" stroke-width="2"/>
<text x="848.54" y="243.54" font-size="14" fill="#0cb8ce" text-anchor="middle">2.0</text>
<path d="M846.14 135.53 L777.10 170.08 L767.61 168.06 L772.90 159.92 Z" fill="#0ab4c8"/>
<text x="775" y="219" font-size="18" fill="#ececec" text-anchor="middle">1.5 m</text>
<text x="775" y="235" font-size="13.5" fill="#f4f4f4" text-anchor="middle">水位</text>
</g>
<rect x="665" y="293" width="221" height="4" fill="#fafafa"/>
<rect x="822.5" y="285.7" width="11" height="18.8" rx="3" fill="#20242f"/>
<rect x="823.5" y="286.7" width="9" height="16.8" rx="2" fill="#ffffff"/>
<rect x="824.7" y="288" width="6.6" height="7" fill="#f4f4f4"/>
<rect x="824.7" y="295" width="6.6" height="6.8" fill="#d9d9d9"/>
<clipPath id="c3"><rect x="210" y="300" width="221" height="250"/></clipPath>
<g clip-path="url(#c3)">
<path d="M273.33 471.67 A66 66 0 1 1 366.67 471.67" fill="none" stroke="#393e4a" stroke-width="12" shape-rendering="crispEdges"/>
<line x1="264.14" y1="480.86" x2="252.82" y2="492.18" stroke="#0cb8ce" stroke-width="2"/>
<text x="246.46" y="503.54" font-size="14" fill="#0cb8ce" text-anchor="middle">0</text>
<line x1="259.13" y1="475.36" x2="253.74" y2="479.82" stroke="#0cb8ce" stroke-width="1" stroke-opacity="0.7"/>
<line x1="254.66" y1="469.40" x2="248.87" y2="473.34" stroke="#0cb8ce" stroke-width="1" stroke-opacity="0.7"/>
<line x1="250.77" y1="463.06" x2="244.64" y2="466.43" stroke="#0cb8ce" stroke-width="1" stroke-opacity="0.7"/>
<line x1="247.50" y1="456.37" x2="241.07" y2="459.15" stroke="#0cb8ce" stroke-width="1" stroke-opacity="0.7"/>
<line x1="244.87" y1="449.41" x2="229.65" y2="454.36" stroke="#0cb8ce" stroke-width="2"/>
<text x="221.09" y="462.14" font-size="14" fill="#0cb8ce" text-anchor="middle">5</text>
<line x1="242.90" y1="442.23" x2="236.07" y2="443.76" stroke="#0cb8ce" stroke-width="1" stroke-opacity="0.7"/>
<line x1="241.62" y1="434.90" x2="234.68" y2="435.78" stroke="#0cb8ce" stroke-width="1" stroke-opacity="0.7"/>
<line x1="241.04" y1="427.48" x2="234.04" y2="427.70" stroke="#0cb8ce" stroke-width="1" stroke-opacity="0.7"/>
<line x1="241.16" y1="420.04" x2="234.17" y2="419.60" stroke="#0cb8ce" stroke-width="1" stroke-opacity="0.7"/>
<line x1="241.97" y1="412.64" x2="226.17" y2="410.14" stroke="#0cb8ce" stroke-width="2"/>
<text x="217.28" y="413.73" font-size="14" fill="#0cb8ce" text-anchor="middle">10</text>
<line x1="243.48" y1="405.35" x2="236.70" y2="403.61" stroke="#0cb8ce" stroke-width="1" stroke-opacity="0.7"/>
<line x1="245.67" y1="398.24" x2="239.08" y2="395.87" stroke="#0cb8ce" stroke-width="1" stroke-opacity="0.7"/>
<line x1="248.52" y1="391.36" x2="242.18" y2="388.38" stroke="#0cb8ce" stroke-width="1" stroke-opacity="0.7"/>
<line x1="252.00" y1="384.79" x2="245.98" y2="381.22" stroke="#0cb8ce" stroke-width="1" stroke-opacity="0.7"/>
<line x1="256.09" y1="378.56" x2="243.14" y2="369.16" stroke="#0cb8ce" stroke-width="2"/>
<text x="235.86" y="368.87" font-size="14" fill="#0cb8ce" text-anchor="middle">15</text>
<line x1="260.74" y1="372.76" x2="255.49" y2="368.13" stroke="#0cb8ce" stroke-width="1" stroke-opacity="0.7"/>
<line x1="265.92" y1="367.41" x2="261.13" y2="362.31" stroke="#0cb8ce" stroke-width="1" stroke-opacity="0.7"/>
<line x1="271.58" y1="362.58" x2="267.29" y2="357.05" stroke="#0cb8ce" stroke-width="1" stroke-opacity="0.7"/>
<line x1="277.67" y1="358.30" x2="273.92" y2="352.39" stroke="#0cb8ce" stroke-width="1" stroke-opacity="0.7"/>
<line x1="284.13" y1="354.61" x2="276.87" y2="340.35" stroke="#0cb8ce" stroke-width="2"/>
<text x="272.78" y="337.34" font-size="14" fill="#0cb8ce" text-anchor="middle">20</text>
<line x1="290.92" y1="351.55" x2="288.34" y2="345.04" stroke="#0cb8ce" stroke-width="1" stroke-opacity="0.7"/>
<line x1="297.96" y1="349.14" x2="296.01" y2="342.41" stroke="#0cb8ce" stroke-width="1" stroke-opacity="0.7"/>
<line x1="305.20" y1="347.40" x2="303.89" y2="340.52" stroke="#0cb8ce" stroke-width="1" stroke-opacity="0.7"/>
<line x1="312.57" y1="346.35" x2="311.91" y2="339.38" stroke="#0cb8ce" stroke-width="1" stroke-opacity="0.7"/>
<line x1="320.00" y1="346.00" x2="320.00" y2="330.00" stroke="#0cb8ce" stroke-width="2"/>
<text x="320.00" y="326.00" font-size="14" fill="#0cb8ce" text-anchor="middle">25</text>
<line x1="327.43" y1="346.35" x2="328.09" y2="339.38" stroke="#0cb8ce" stroke-width="1" stroke-opacity="0.7"/>
<line x1="334.80" y1="347.40" x2="336.11" y2="340.52" stroke="#0cb8ce" stroke-width="1" stroke-opacity="0.7"/>
<line x1="342.04" y1="349.14" x2="343.99" y2="342.41" stroke="#0cb8ce" stroke-width="1" stroke-opacity="0.7"/>
<line x1="349.08" y1="351.55" x2="351.66" y2="345.04" stroke="#0cb8ce" stroke-width="1" stroke-opacity="0.7"/>
<line x1="355.87" y1="354.61" x2="363.13" y2="340.35" stroke="#0cb8ce" stroke-width="2"/>
<text x="367.22" y="337.34" font-size="14" fill="#0cb8ce" text-anchor="middle">30</text>
<line x1="362.33" y1="358.30" x2="366.08" y2="352.39" stroke="#0cb8ce" stroke-width="1" stroke-opacity="0.7"/>
<line x1="368.42" y1="362.58" x2="372.71" y2="357.05" stroke="#0cb8ce" stroke-width="1" stroke-opacity="0.7"/>
<line x1="374.08" y1="367.41" x2="378.87" y2="362.31" stroke="#0cb8ce" stroke-width="1" stroke-opacity="0.7"/>
<line x1="379.26" y1="372.76" x2="384.51" y2="368.13" stroke="#0cb8ce" stroke-width="1" stroke-opacity="0.7"/>
<line x1="383.91" y1="378.56" x2="396.86" y2="369.16" stroke="#0cb8ce" stroke-width="2"/>
<text x="404.14" y="368.87" font-size="14" fill="#0cb8ce" text-anchor="middle">35</text>
<line x1="388.00" y1="384.79" x2="394.02" y2="381.22" stroke="#0cb8ce" stroke-width="1" stroke-opacity="0.7"/>
<line x1="391.48" y1="391.36" x2="397.82" y2="388.38" stroke="#0cb8ce" stroke-width="1" stroke-opacity="0.7"/>
<line x1="394.33" y1="398.24" x2="400.92" y2="395.87" stroke="#0cb8ce" stroke-width="1" stroke-opacity="0.7"/>
<line x1="396.52" y1="405.35" x2="403.30" y2="403.61" stroke="#0cb8ce" stroke-width="1" stroke-opacity="0.7"/>
<line x1="398.03" y1="412.64" x2="413.83" y2="410.14" stroke="#0cb8ce" stroke-width="2"/>
<text x="422.72" y="413.73" font-size="14" fill="#0cb8ce" text-anchor="middle">40</text>
<line x1="398.84" y1="420.04" x2="405.83" y2="419.60" stroke="#0cb8ce" stroke-width="1" stroke-opacity="0.7"/>
<line x1="398.96" y1="427.48" x2="405.96" y2="427.70" stroke="#0cb8ce" stroke-width="1" stroke-opacity="0.7"/>
<line x1="398.38" y1="434.90" x2="405.32" y2="435.78" stroke="#0cb8ce" stroke-width="1" stroke-opacity="0.7"/>
<line x1="397.10" y1="442.23" x2="403.93" y2="443.76" stroke="#0cb8ce" stroke-width="1" stroke-opacity="0.7"/>
<line x1="395.13" y1="449.41" x2="410.35" y2="454.36" stroke="#0cb8ce" stroke-width="2"/>
<text x="418.91" y="462.14" font-size="14" fill="#0cb8ce" text-anchor="middle">45</text>
<line x1="392.50" y1="456.37" x2="398.93" y2="459.15" stroke="#0cb8ce" stroke-width="1" stroke-opacity="0.7"/>
<line x1="389.23" y1="463.06" x2="395.36" y2="466.43" stroke="#0cb8ce" stroke-width="1" stroke-opacity="0.7"/>
<line x1="385.34" y1="469.40" x2="391.13" y2="473.34" stroke="#0cb8ce" stroke-width="1" stroke-opacity="0.7"/>
<line x1="380.87" y1="475.36" x2="386.26" y2="479.82" stroke="#0cb8ce" stroke-width="1" stroke-opacity="0.7"/>
<line x1="375.86" y1="480.86" x2="387.18" y2="492.18" stroke="#0cb8ce" stroke-width="2"/>
<text x="393.54" y="503.54" font-size="14" fill="#0cb8ce" text-anchor="middle">50</text>
<path d="M244.85 441.80 L318.80 419.63 L327.81 423.25 L321.20 430.37 Z" fill="#0ab4c8"/>
<text x="320" y="479" font-size="18" fill="#ececec" text-anchor="middle">6.00 kW</text>
<text x="320" y="495" font-size="13.5" fill="#f4f4f4" text-anchor="middle">有功功率</text>
</g>
<rect x="210" y="553" width="221" height="4" fill="#fafafa"/>
<rect x="233.9" y="545.7" width="11" height="18.8" rx="3" fill="#20242f"/>
<rect x="234.9" y="546.7" width="9" height="16.8" rx="2" fill="#ffffff"/>
<rect x="236.1" y="548" width="6.6" height="7" fill="#f4f4f4"/>
<rect x="236.1" y="555" width="6.6" height="6.8" fill="#d9d9d9"/>
<clipPath id="c4"><rect x="437" y="300" width="222" height="250"/></clipPath>
<g clip-path="url(#c4)">
<path d="M501.33 471.67 A66 66 0 1 1 594.67 471.67" fill="none" stroke="#393e4a" stroke-width="12" shape-rendering="crispEdges"/>
<line x1="492.14" y1="480.86" x2="480.82" y2="492.18" stroke="#0cb8ce" stroke-width="2"/>
<text x="474.46" y="503.54" font-size="14" fill="#0cb8ce" text-anchor="middle">0</text>
<line x1="487.13" y1="475.36" x2="481.74" y2="479.82" stroke="#0cb8ce" stroke-width="1" stroke-opacity="0.7"/>
<line x1="482.66" y1="469.40" x2="476.87" y2="473.34" stroke="#0cb8ce" stroke-width="1" stroke-opacity="0.7"/>
<line x1="478.77" y1="463.06" x2="472.64" y2="466.43" stroke="#0cb8ce" stroke-width="1" stroke-opacity="0.7"/>
<line x1="475.50" y1="456.37" x2="469.07" y2="459.15" stroke="#0cb8ce" stroke-width="1" stroke-opacity="0.7"/>
<line x1="472.87" y1="449.41" x2="457.65" y2="454.36" stroke="#0cb8ce" stroke-width="2"/>
<text x="449.09" y="462.14" font-size="14" fill="#0cb8ce" text-anchor="middle">7</text>
<line x1="470.90" y1="442.23" x2="464.07" y2="443.76" stroke="#0cb8ce" stroke-width="1" stroke-opacity="0.7"/>
<line x1="469.62" y1="434.90" x2="462.68" y2="435.78" stroke="#0cb8ce" stroke-width="1" stroke-opacity="0.7"/>
<line x1="469.04" y1="427.48" x2="462.04" y2="427.70" stroke="#0cb8ce" stroke-width="1" stroke-opacity="0.7"/>
<line x1="469.16" y1="420.04" x2="462.17" y2="419.60" stroke="#0cb8ce" stroke-width="1" stroke-opacity="0.7"/>
<line x1="469.97" y1="412.64" x2="454.17" y2="410.14" stroke="#0cb8ce" stroke-width="2"/>
<text x="445.28" y="413.73" font-size="14" fill="#0cb8ce" text-anchor="middle">14</text>
<line x1="471.48" y1="405.35" x2="464.70" y2="403.61" stroke="#0cb8ce" stroke-width="1" stroke-opacity="0.7"/>
<line x1="473.67" y1="398.24" x2="467.08" y2="395.87" stroke="#0cb8ce" stroke-width="1" stroke-opacity="0.7"/>
<line x1="476.52" y1="391.36" x2="470.18" y2="388.38" stroke="#0cb8ce" stroke-width="1" stroke-opacity="0.7"/>
<line x1="480.00" y1="384.79" x2="473.98" y2="381.22" stroke="#0cb8ce" stroke-width="1" stroke-opacity="0.7"/>
<line x1="484.09" y1="378.56" x2="471.14" y2="369.16" stroke="#0cb8ce" stroke-width="2"/>
<text x="463.86" y="368.87" font-size="14" fill="#0cb8ce" text-anchor="middle">21</text>
<line x1="488.74" y1="372.76" x2="483.49" y2="368.13" stroke="#0cb8ce" stroke-width="1" stroke-opacity="0.7"/>
<line x1="493.92" y1="367.41" x2="489.13" y2="362.31" stroke="#0cb8ce" stroke-width="1" stroke-opacity="0.7"/>
<line x1="499.58" y1="362.58" x2="495.29" y2="357.05" stroke="#0cb8ce" stroke-width="1" stroke-opacity="0.7"/>
<line x1="505.67" y1="358.30" x2="501.92" y2="352.39" stroke="#0cb8ce" stroke-width="1" stroke-opacity="0.7"/>
<line x1="512.13" y1="354.61" x2="504.87" y2="340.35" stroke="#0cb8ce" stroke-width="2"/>
<text x="500.78" y="337.34" font-size="14" fill="#0cb8ce" text-anchor="middle">28</text>
<line x1="518.92" y1="351.55" x2="516.34" y2="345.04" stroke="#0cb8ce" stroke-width="1" stroke-opacity="0.7"/>
<line x1="525.96" y1="349.14" x2="524.01" y2="342.41" stroke="#0cb8ce" stroke-width="1" stroke-opacity="0.7"/>
<line x1="533.20" y1="347.40" x2="531.89" y2="340.52" stroke="#0cb8ce" stroke-width="1" stroke-opacity="0.7"/>
<line x1="540.57" y1="346.35" x2="539.91" y2="339.38" stroke="#0cb8ce" stroke-width="1" stroke-opacity="0.7"/>
<line x1="548.00" y1="346.00" x2="548.00" y2="330.00" stroke="#0cb8ce" stroke-width="2"/>
<text x="548.00" y="326.00" font-size="14" fill="#0cb8ce" text-anchor="middle">35</text>
<line x1="555.43" y1="346.35" x2="556.09" y2="339.38" stroke="#0cb8ce" stroke-width="1" stroke-opacity="0.7"/>
<line x1="562.80" y1="347.40" x2="564.11" y2="340.52" stroke="#0cb8ce" stroke-width="1" stroke-opacity="0.7"/>
<line x1="570.04" y1="349.14" x2="571.99" y2="342.41" stroke="#0cb8ce" stroke-width="1" stroke-opacity="0.7"/>
<line x1="577.08" y1="351.55" x2="579.66" y2="345.04" stroke="#0cb8ce" stroke-width="1" stroke-opacity="0.7"/>
<line x1="583.87" y1="354.61" x2="591.13" y2="340.35" stroke="#0cb8ce" stroke-width="2"/>
<text x="595.22" y="337.34" font-size="14" fill="#0cb8ce" text-anchor="middle">42</text>
<line x1="590.33" y1="358.30" x2="594.08" y2="352.39" stroke="#0cb8ce" stroke-width="1" stroke-opacity="0.7"/>
<line x1="596.42" y1="362.58" x2="600.71" y2="357.05" stroke="#0cb8ce" stroke-width="1" stroke-opacity="0.7"/>
<line x1="602.08" y1="367.41" x2="606.87" y2="362.31" stroke="#0cb8ce" stroke-width="1" stroke-opacity="0.7"/>
<line x1="607.26" y1="372.76" x2="612.51" y2="368.13" stroke="#0cb8ce" stroke-width="1" stroke-opacity="0.7"/>
<line x1="611.91" y1="378.56" x2="624.86" y2="369.16" stroke="#0cb8ce" stroke-width="2"/>
<text x="632.14" y="368.87" font-size="14" fill="#0cb8ce" text-anchor="middle">49</text>
<line x1="616.00" y1="384.79" x2="622.02" y2="381.22" stroke="#0cb8ce" stroke-width="1" stroke-opacity="0.7"/>
<line x1="619.48" y1="391.36" x2="625.82" y2="388.38" stroke="#0cb8ce" stroke-width="1" stroke-opacity="0.7"/>
<line x1="622.33" y1="398.24" x2="628.92" y2="395.87" stroke="#0cb8ce" stroke-width="1" stroke-opacity="0.7"/>
<line x1="624.52" y1="405.35" x2="631.30" y2="403.61" stroke="#0cb8ce" stroke-width="1" stroke-opacity="0.7"/>
<line x1="626.03" y1="412.64" x2="641.83" y2="410.14" stroke="#0cb8ce" stroke-width="2"/>
<text x="650.72" y="413.73" font-size="14" fill="#0cb8ce" text-anchor="middle">56</text>
<line x1="626.84" y1="420.04" x2="633.83" y2="419.60" stroke="#0cb8ce" stroke-width="1" stroke-opacity="0.7"/>
<line x1="626.96" y1="427.48" x2="633.96" y2="427.70" stroke="#0cb8ce" stroke-width="1" stroke-opacity="0.7"/>
<line x1="626.38" y1="434.90" x2="633.32" y2="435.78" stroke="#0cb8ce" stroke-width="1" stroke-opacity="0.7"/>
<line x1="625.10" y1="442.23" x2="631.93" y2="443.76" stroke="#0cb8ce" stroke-width="1" stroke-opacity="0.7"/>
<line x1="623.13" y1="449.41" x2="638.35" y2="454.36" stroke="#0cb8ce" stroke-width="2"/>
<text x="646.91" y="462.14" font-size="14" fill="#0cb8ce" text-anchor="middle">63</text>
<line x1="620.50" y1="456.37" x2="626.93" y2="459.15" stroke="#0cb8ce" stroke-width="1" stroke-opacity="0.7"/>
<line x1="617.23" y1="463.06" x2="623.36" y2="466.43" stroke="#0cb8ce" stroke-width="1" stroke-opacity="0.7"/>
<line x1="613.34" y1="469.40" x2="619.13" y2="473.34" stroke="#0cb8ce" stroke-width="1" stroke-opacity="0.7"/>
<line x1="608.87" y1="475.36" x2="614.26" y2="479.82" stroke="#0cb8ce" stroke-width="1" stroke-opacity="0.7"/>
<line x1="603.86" y1="480.86" x2="615.18" y2="492.18" stroke="#0cb8ce" stroke-width="2"/>
<text x="621.54" y="503.54" font-size="14" fill="#0cb8ce" text-anchor="middle">70</text>
<path d="M476.54 453.67 L545.95 419.90 L555.42 422.02 L550.05 430.10 Z" fill="#0ab4c8"/>
<text x="548" y="479" font-size="18" fill="#ececec" text-anchor="middle">6.0 kWh</text>
<text x="548" y="495" font-size="13.5" fill="#f4f4f4" text-anchor="middle">有功电能</text>
</g>
<rect x="437" y="553" width="222" height="4" fill="#fafafa"/>
<rect x="453.8" y="545.7" width="11" height="18.8" rx="3" fill="#20242f"/>
<rect x="454.8" y="546.7" width="9" height="16.8" rx="2" fill="#ffffff"/>
<rect x="456.0" y="548" width="6.6" height="7" fill="#f4f4f4"/>
<rect x="456.0" y="555" width="6.6" height="6.8" fill="#d9d9d9"/>
<clipPath id="c5"><rect x="665" y="300" width="222" height="250"/></clipPath>
<g clip-path="url(#c5)">
<path d="M728.33 471.67 A66 66 0 1 1 821.67 471.67" fill="none" stroke="#393e4a" stroke-width="12" shape-rendering="crispEdges"/>
<line x1="719.14" y1="480.86" x2="707.82" y2="492.18" stroke="#0cb8ce" stroke-width="2"/>
<text x="701.46" y="503.54" font-size="14" fill="#0cb8ce" text-anchor="middle">0</text>
<line x1="714.13" y1="475.36" x2="708.74" y2="479.82" stroke="#0cb8ce" stroke-width="1" stroke-opacity="0.7"/>
<line x1="709.66" y1="469.40" x2="703.87" y2="473.34" stroke="#0cb8ce" stroke-width="1" stroke-opacity="0.7"/>
<line x1="705.77" y1="463.06" x2="699.64" y2="466.43" stroke="#0cb8ce" stroke-width="1" stroke-opacity="0.7"/>
<line x1="702.50" y1="456.37" x2="696.07" y2="459.15" stroke="#0cb8ce" stroke-width="1" stroke-opacity="0.7"/>
<line x1="699.87" y1="449.41" x2="684.65" y2="454.36" stroke="#0cb8ce" stroke-width="2"/>
<text x="676.09" y="462.14" font-size="14" fill="#0cb8ce" text-anchor="middle">10</text>
<line x1="697.90" y1="442.23" x2="691.07" y2="443.76" stroke="#0cb8ce" stroke-width="1" stroke-opacity="0.7"/>
<line x1="696.62" y1="434.90" x2="689.68" y2="435.78" stroke="#0cb8ce" stroke-width="1" stroke-opacity="0.7"/>
<line x1="696.04" y1="427.48" x2="689.04" y2="427.70" stroke="#0cb8ce" stroke-width="1" stroke-opacity="0.7"/>
<line x1="696.16" y1="420.04" x2="689.17" y2="419.60" stroke="#0cb8ce" stroke-width="1" stroke-opacity="0.7"/>
<line x1="696.97" y1="412.64" x2="681.17" y2="410.14" stroke="#0cb8ce" stroke-width="2"/>
<text x="672.28" y="413.73" font-size="14" fill="#0cb8ce" text-anchor="middle">20</text>
<line x1="698.48" y1="405.35" x2="691.70" y2="403.61" stroke="#0cb8ce" stroke-width="1" stroke-opacity="0.7"/>
<line x1="700.67" y1="398.24" x2="694.08" y2="395.87" stroke="#0cb8ce" stroke-width="1" stroke-opacity="0.7"/>
<line x1="703.52" y1="391.36" x2="697.18" y2="388.38" stroke="#0cb8ce" stroke-width="1" stroke-opacity="0.7"/>
<line x1="707.00" y1="384.79" x2="700.98" y2="381.22" stroke="#0cb8ce" stroke-width="1" stroke-opacity="0.7"/>
<line x1="711.09" y1="378.56" x2="698.14" y2="369.16" stroke="#0cb8ce" stroke-width="2"/>
<text x="690.86" y="368.87" font-size="14" fill="#0cb8ce" text-anchor="middle">30</text>
<line x1="715.74" y1="372.76" x2="710.49" y2="368.13" stroke="#0cb8ce" stroke-width="1" stroke-opacity="0.7"/>
<line x1="720.92" y1="367.41" x2="716.13" y2="362.31" stroke="#0cb8ce" stroke-width="1" stroke-opacity="0.7"/>
<line x1="726.58" y1="362.58" x2="722.29" y2="357.05" stroke="#0cb8ce" stroke-width="1" stroke-opacity="0.7"/>
<line x1="732.67" y1="358.30" x2="728.92" y2="352.39" stroke="#0cb8ce" stroke-width="1" stroke-opacity="0.7"/>
<line x1="739.13" y1="354.61" x2="731.87" y2="340.35" stroke="#0cb8ce" stroke-width="2"/>
<text x="727.78" y="337.34" font-size="14" fill="#0cb8ce" text-anchor="middle">40</text>
<line x1="745.92" y1="351.55" x2="743.34" y2="345.04" stroke="#0cb8ce" stroke-width="1" stroke-opacity="0.7"/>
<line x1="752.96" y1="349.14" x2="751.01" y2="342.41" stroke="#0cb8ce" stroke-width="1" stroke-opacity="0.7"/>
<line x1="760.20" y1="347.40" x2="758.89" y2="340.52" stroke="#0cb8ce" stroke-width="1" stroke-opacity="0.7"/>
<line x1="767.57" y1="346.35" x2="766.91" y2="339.38" stroke="#0cb8ce" stroke-width="1" stroke-opacity="0.7"/>
<line x1="775.00" y1="346.00" x2="775.00" y2="330.00" stroke="#0cb8ce" stroke-width="2"/>
<text x="775.00" y="326.00" font-size="14" fill="#0cb8ce" text-anchor="middle">50</text>
<line x1="782.43" y1="346.35" x2="783.09" y2="339.38" stroke="#0cb8ce" stroke-width="1" stroke-opacity="0.7"/>
<line x1="789.80" y1="347.40" x2="791.11" y2="340.52" stroke="#0cb8ce" stroke-width="1" stroke-opacity="0.7"/>
<line x1="797.04" y1="349.14" x2="798.99" y2="342.41" stroke="#0cb8ce" stroke-width="1" stroke-opacity="0.7"/>
<line x1="804.08" y1="351.55" x2="806.66" y2="345.04" stroke="#0cb8ce" stroke-width="1" stroke-opacity="0.7"/>
<line x1="810.87" y1="354.61" x2="818.13" y2="340.35" stroke="#0cb8ce" stroke-width="2"/>
<text x="822.22" y="337.34" font-size="14" fill="#0cb8ce" text-anchor="middle">60</text>
<line x1="817.33" y1="358.30" x2="821.08" y2="352.39" stroke="#0cb8ce" stroke-width="1" stroke-opacity="0.7"/>
<line x1="823.42" y1="362.58" x2="827.71" y2="357.05" stroke="#0cb8ce" stroke-width="1" stroke-opacity="0.7"/>
<line x1="829.08" y1="367.41" x2="833.87" y2="362.31" stroke="#0cb8ce" stroke-width="1" stroke-opacity="0.7"/>
<line x1="834.26" y1="372.76" x2="839.51" y2="368.13" stroke="#0cb8ce" stroke-width="1" stroke-opacity="0.7"/>
<line x1="838.91" y1="378.56" x2="851.86" y2="369.16" stroke="#0cb8ce" stroke-width="2"/>
<text x="859.14" y="368.87" font-size="14" fill="#0cb8ce" text-anchor="middle">70</text>
<line x1="843.00" y1="384.79" x2="849.02" y2="381.22" stroke="#0cb8ce" stroke-width="1" stroke-opacity="0.7"/>
<line x1="846.48" y1="391.36" x2="852.82" y2="388.38" stroke="#0cb8ce" stroke-width="1" stroke-opacity="0.7"/>
<line x1="849.33" y1="398.24" x2="855.92" y2="395.87" stroke="#0cb8ce" stroke-width="1" stroke-opacity="0.7"/>
<line x1="851.52" y1="405.35" x2="858.30" y2="403.61" stroke="#0cb8ce" stroke-width="1" stroke-opacity="0.7"/>
<line x1="853.03" y1="412.64" x2="868.83" y2="410.14" stroke="#0cb8ce" stroke-width="2"/>
<text x="877.72" y="413.73" font-size="14" fill="#0cb8ce" text-anchor="middle">80</text>
<line x1="853.84" y1="420.04" x2="860.83" y2="419.60" stroke="#0cb8ce" stroke-width="1" stroke-opacity="0.7"/>
<line x1="853.96" y1="427.48" x2="860.96" y2="427.70" stroke="#0cb8ce" stroke-width="1" stroke-opacity="0.7"/>
<line x1="853.38" y1="434.90" x2="860.32" y2="435.78" stroke="#0cb8ce" stroke-width="1" stroke-opacity="0.7"/>
<line x1="852.10" y1="442.23" x2="858.93" y2="443.76" stroke="#0cb8ce" stroke-width="1" stroke-opacity="0.7"/>
<line x1="850.13" y1="449.41" x2="865.35" y2="454.36" stroke="#0cb8ce" stroke-width="2"/>
<text x="873.91" y="462.14" font-size="14" fill="#0cb8ce" text-anchor="middle">90</text>
<line x1="847.50" y1="456.37" x2="853.93" y2="459.15" stroke="#0cb8ce" stroke-width="1" stroke-opacity="0.7"/>
<line x1="844.23" y1="463.06" x2="850.36" y2="466.43" stroke="#0cb8ce" stroke-width="1" stroke-opacity="0.7"/>
<line x1="840.34" y1="469.40" x2="846.13" y2="473.34" stroke="#0cb8ce" stroke-width="1" stroke-opacity="0.7"/>
<line x1="835.87" y1="475.36" x2="841.26" y2="479.82" stroke="#0cb8ce" stroke-width="1" stroke-opacity="0.7"/>
<line x1="830.86" y1="480.86" x2="842.18" y2="492.18" stroke="#0cb8ce" stroke-width="2"/>
<text x="848.54" y="503.54" font-size="14" fill="#0cb8ce" text-anchor="middle">100</text>
<path d="M775.00 348.00 L780.50 425.00 L775.00 433.00 L769.50 425.00 Z" fill="#0ab4c8"/>
<text x="775" y="479" font-size="18" fill="#ececec" text-anchor="middle">50 Hz</text>
<text x="775" y="495" font-size="13.5" fill="#f4f4f4" text-anchor="middle">电网频率</text>
</g>
<rect x="665" y="553" width="221" height="4" fill="#fafafa"/>
<rect x="769.5" y="545.7" width="11" height="18.8" rx="3" fill="#20242f"/>
<rect x="770.5" y="546.7" width="9" height="16.8" rx="2" fill="#ffffff"/>
<rect x="771.7" y="548" width="6.6" height="7" fill="#f4f4f4"/>
<rect x="771.7" y="555" width="6.6" height="6.8" fill="#d9d9d9"/>
</svg>
</body></html>
